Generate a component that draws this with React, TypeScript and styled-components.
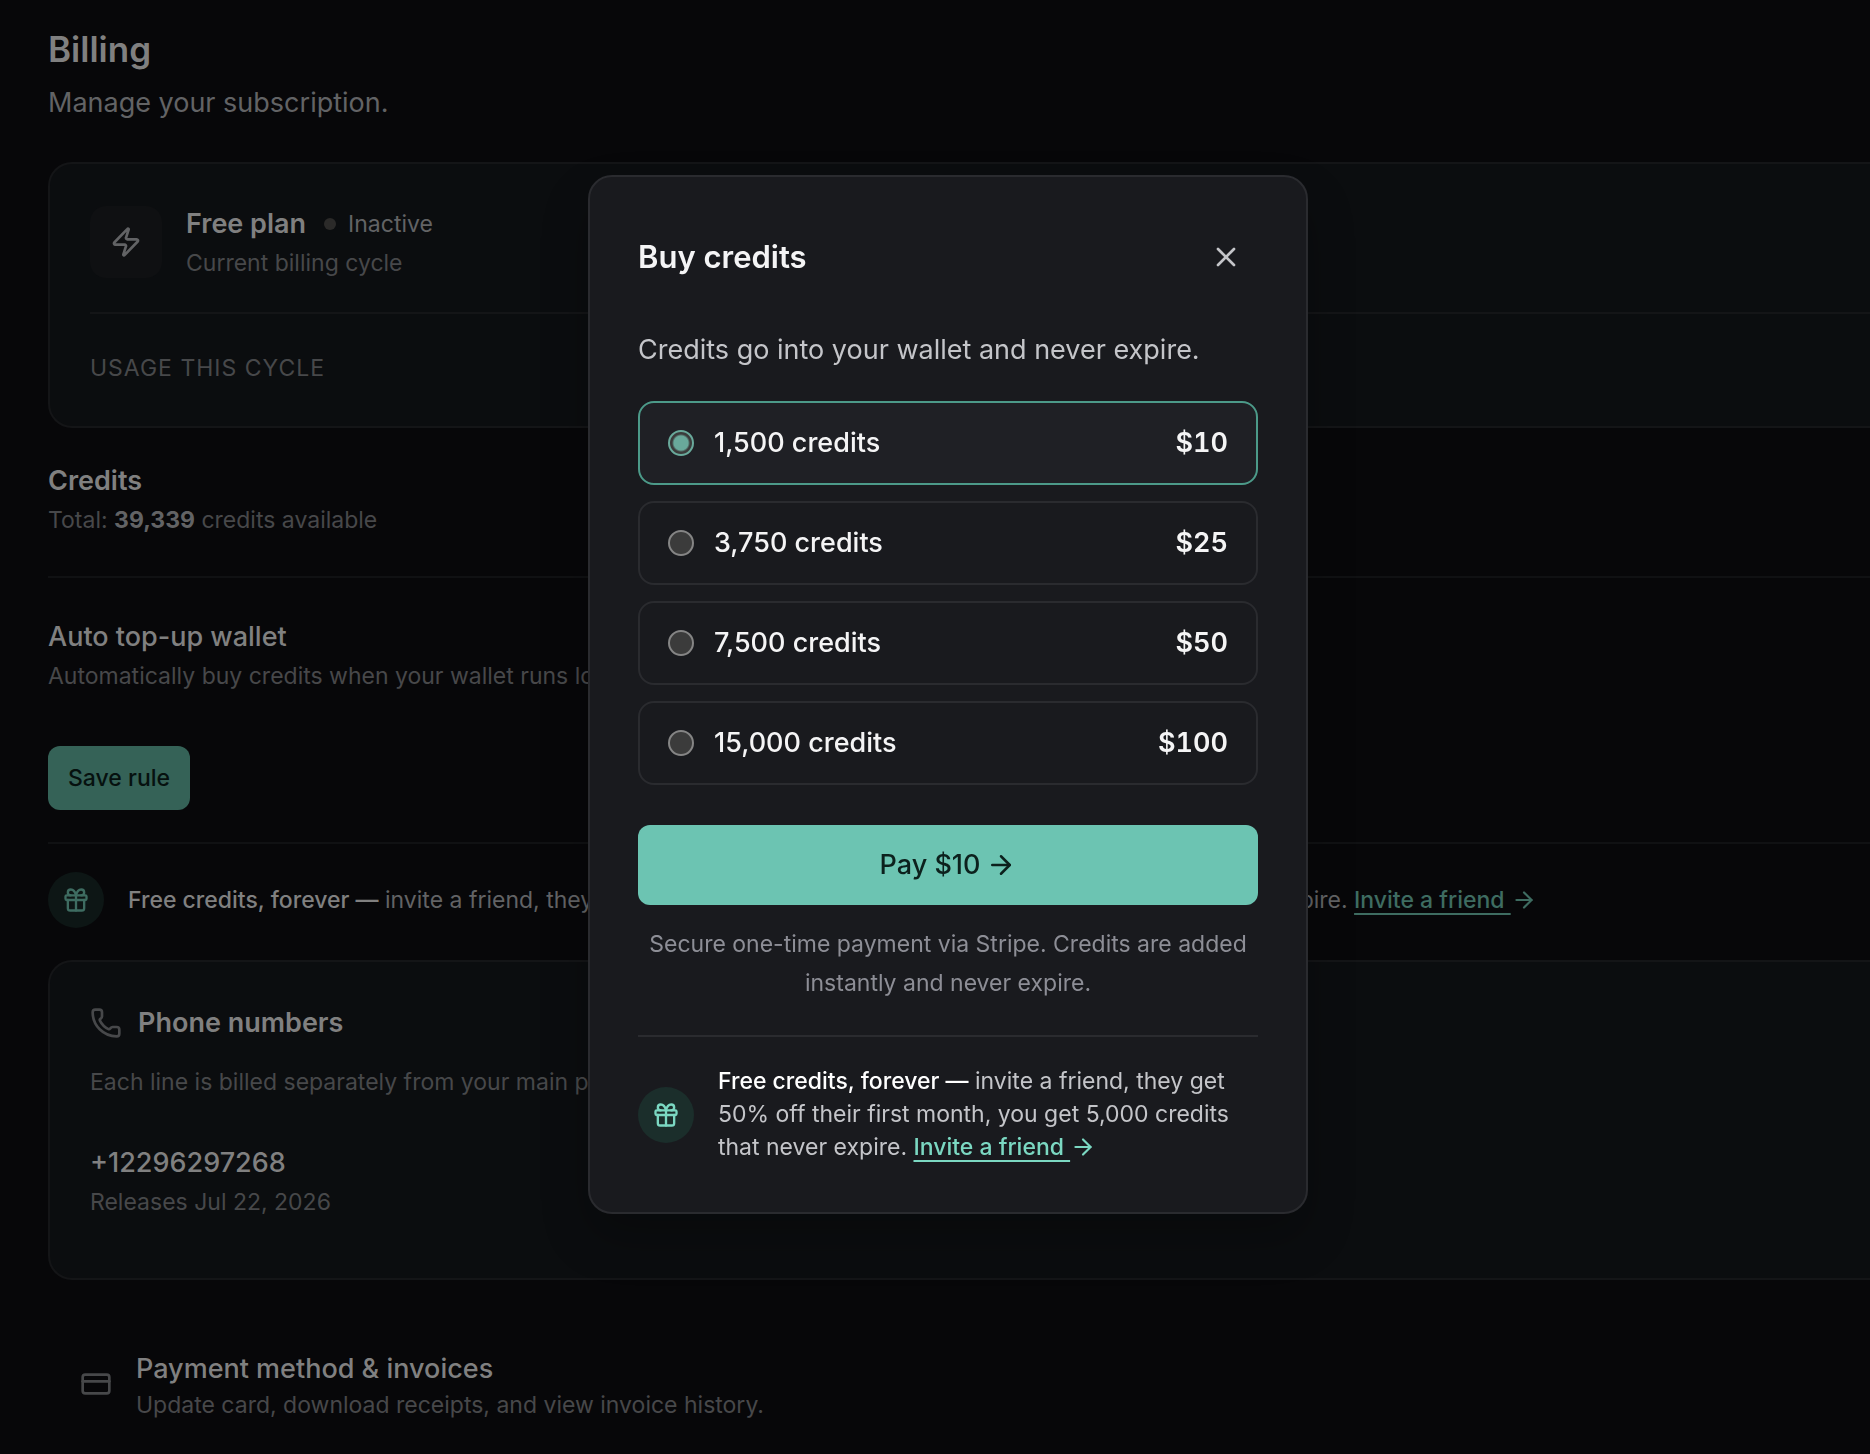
import React, { useState } from "react";
import styled, { createGlobalStyle } from "styled-components";
import { ArrowRight, CreditCard, Gift, Phone, X, Zap } from "lucide-react";

const GlobalStyle = createGlobalStyle`
  *, *::before, *::after { box-sizing: border-box; }
  body {
    margin: 0;
    background: #070709;
    font-family: Inter, "Liberation Sans", sans-serif;
    font-size: 23px;
    line-height: 36px;
    -webkit-font-smoothing: antialiased;
  }
  h1, h2, h3, p { margin: 0; }
  button, input { font: inherit; }
`;

const Page = styled.main`
  min-height: 100vh;
  padding: 28px 0 36px 48px;
  color: #47484a;
  overflow: hidden;
`;

const PageTitle = styled.h1`
  font-size: 35px;
  line-height: 42px;
  font-weight: 600;
  color: #808080;
`;

const PageIntro = styled.p`
  margin-top: 12px;
  font-size: 27px;
  line-height: 42px;
  color: #626365;
`;

/* Cards bleed off the right edge of the window. */
const Card = styled.section`
  border: 2px solid #141517;
  border-right: 0;
  border-radius: 24px 0 0 24px;
  background: #0b0d0f;
  padding-left: 40px;
`;

const PlanCard = styled(Card)`
  margin-top: 38px;
`;

const PlanHeader = styled.div`
  display: flex;
  align-items: center;
  gap: 24px;
  height: 150px;
  padding-top: 8px;
  border-bottom: 2px solid #141517;
`;

const PlanIcon = styled.div`
  display: grid;
  place-items: center;
  width: 72px;
  height: 72px;
  border-radius: 16px;
  background: #0f1012;
  color: #626365;
`;

const Row = styled.div`
  display: flex;
  align-items: center;
`;

const Status = styled.span`
  display: flex;
  align-items: center;
  gap: 12px;
  margin-left: 18px;
  color: #626365;

  &::before {
    content: "";
    width: 12px;
    height: 12px;
    border-radius: 50%;
    background: #2b2a29;
  }
`;

const Heading = styled.h2<{ $weight?: number }>`
  font-size: 27px;
  line-height: 42px;
  font-weight: ${(p) => p.$weight ?? 600};
  color: #808080;
`;

const UsageLabel = styled.p`
  padding: 36px 0 40px;
  letter-spacing: 1px;
`;

const Section = styled.section<{ $top: number; $bottom: number }>`
  padding: ${(p) => p.$top}px 0 ${(p) => p.$bottom}px;
  border-bottom: 2px solid #101113;

  strong { font-weight: 700; color: #626365; }
`;

const SaveButton = styled.button`
  display: block;
  height: 64px;
  margin-top: 52px;
  padding: 0 20px;
  border: 0;
  border-radius: 12px;
  background: #356257;
  color: #06110f;
  font-weight: 500;
`;

const Invite = styled.div<{ $lit?: boolean }>`
  display: flex;
  align-items: center;
  gap: 24px;
  line-height: 33px;
  color: ${(p) => (p.$lit ? "#c4c5c9" : "#626365")};

  strong { font-weight: 500; color: ${(p) => (p.$lit ? "#ffffff" : "#808080")}; }
  a {
    color: ${(p) => (p.$lit ? "#7bd8c2" : "#3e6c61")};
    font-weight: 500;
    text-decoration: none;
    white-space: nowrap;
  }
  a span {
    text-decoration: underline;
    text-decoration-thickness: 2px;
    text-underline-offset: 5px;
    white-space: pre;
  }
  a svg { vertical-align: -5px; }
`;

const GiftBadge = styled.div<{ $lit?: boolean }>`
  flex: none;
  display: grid;
  place-items: center;
  width: 56px;
  height: 56px;
  border-radius: 50%;
  background: ${(p) => (p.$lit ? "#1b2e2b" : "#0d1615")};
  color: ${(p) => (p.$lit ? "#7bd8c2" : "#3e6c61")};
`;

const InviteBar = styled.div`
  padding: 28px 0 32px;
`;

const PhoneCard = styled(Card)`
  padding-top: 40px;
  padding-bottom: 58px;
`;

const PhoneHeader = styled(Row)`
  gap: 16px;
  color: #47484a;
`;

const PhoneNote = styled.p`
  margin-top: 20px;
`;

const PhoneLine = styled.div`
  margin-top: 42px;
`;

const PaymentRow = styled(Row)`
  gap: 24px;
  margin-top: 68px;
  padding-left: 32px;

  p { line-height: 30px; }
`;

const Overlay = styled.div`
  position: fixed;
  inset: 0;
  display: flex;
  justify-content: center;
  align-items: flex-start;
  padding: 175px 0 0 26px;
`;

const Dialog = styled.div`
  width: 720px;
  padding: 48px;
  border: 2px solid #2a2b2f;
  border-radius: 24px;
  background: #191a1e;
  color: #c4c5c9;
  box-shadow: 0 24px 48px rgba(0, 0, 0, 0.24);
`;

const DialogHeader = styled.div`
  display: flex;
  align-items: center;
  justify-content: space-between;
  height: 64px;
`;

const DialogTitle = styled.h2`
  font-size: 31px;
  line-height: 40px;
  font-weight: 600;
  color: #f4f4f5;
`;

const CloseButton = styled.button`
  display: grid;
  place-items: center;
  width: 64px;
  height: 64px;
  padding: 0;
  border: 0;
  background: none;
  color: #c4c5c9;
`;

const DialogIntro = styled.p`
  margin-top: 40px;
  font-size: 27px;
  line-height: 42px;
`;

const Options = styled.div`
  display: grid;
  gap: 16px;
  margin-top: 30px;
`;

const Option = styled.label<{ $on: boolean }>`
  display: flex;
  align-items: center;
  gap: 20px;
  height: 84px;
  padding: 0 28px;
  border: 2px solid ${(p) => (p.$on ? "#4c9a89" : "#2a2b2f")};
  border-radius: 16px;
  background: ${(p) => (p.$on ? "#1f2025" : "transparent")};
  color: #f4f4f5;
  font-size: 27px;
  font-weight: 500;
`;

const Radio = styled.input`
  appearance: none;
  width: 26px;
  height: 26px;
  margin: 0;
  border: 2px solid #858585;
  border-radius: 50%;
  background: #3b3b3b;

  &:checked {
    border-color: #69a99b;
    background: radial-gradient(circle, #69a99b 7px, #3b3b3b 9px);
  }
`;

const Price = styled.span`
  margin-left: auto;
  font-weight: 600;
  font-variant-numeric: tabular-nums;
`;

const PayButton = styled.button`
  display: flex;
  align-items: center;
  justify-content: center;
  gap: 6px;
  width: 100%;
  height: 80px;
  margin-top: 40px;
  border: 0;
  border-radius: 12px;
  background: #6cc4b2;
  color: #0c211d;
  font-size: 27px;
  font-weight: 500;
`;

const Fineprint = styled.p`
  margin-top: 20px;
  line-height: 39px;
  text-align: center;
  color: #8d8e96;
`;

const DialogFooter = styled.div`
  margin-top: 32px;
  padding-top: 28px;
  border-top: 2px solid #2a2b2f;
`;

const packs = [
  { credits: "1,500", price: "$10" },
  { credits: "3,750", price: "$25" },
  { credits: "7,500", price: "$50" },
  { credits: "15,000", price: "$100" },
];

function InviteOffer({ lit }: { lit?: boolean }) {
  return (
    <Invite $lit={lit}>
      <GiftBadge $lit={lit}>
        <Gift size={28} />
      </GiftBadge>
      <p>
        <strong>Free credits, forever —</strong> invite a friend, they get 50% off their first month, you get 5,000
        credits that never expire.{" "}
        <a href="#invite">
          <span>Invite a friend </span>
          <ArrowRight size={26} />
        </a>
      </p>
    </Invite>
  );
}

export default function App() {
  const [selected, setSelected] = useState(0);
  return (
    <>
      <GlobalStyle />
      <Page>
        <PageTitle>Billing</PageTitle>
        <PageIntro>Manage your subscription.</PageIntro>

        <PlanCard>
          <PlanHeader>
            <PlanIcon>
              <Zap size={32} />
            </PlanIcon>
            <div>
              <Row>
                <Heading>Free plan</Heading>
                <Status>Inactive</Status>
              </Row>
              <p>Current billing cycle</p>
            </div>
          </PlanHeader>
          <UsageLabel>USAGE THIS CYCLE</UsageLabel>
        </PlanCard>

        <Section $top={32} $bottom={38}>
          <Heading>Credits</Heading>
          <p>
            Total: <strong>39,339</strong> credits available
          </p>
        </Section>

        <Section $top={38} $bottom={32}>
          <Heading $weight={500}>Auto top-up wallet</Heading>
          <p>Automatically buy credits when your wallet runs low.</p>
          <SaveButton type="button">Save rule</SaveButton>
        </Section>

        <InviteBar>
          <InviteOffer />
        </InviteBar>

        <PhoneCard>
          <PhoneHeader>
            <Phone size={32} />
            <Heading>Phone numbers</Heading>
          </PhoneHeader>
          <PhoneNote>Each line is billed separately from your main plan.</PhoneNote>
          <PhoneLine>
            <Heading $weight={500}>+12296297268</Heading>
            <p>Releases Jul 22, 2026</p>
          </PhoneLine>
        </PhoneCard>

        <PaymentRow>
          <CreditCard size={32} />
          <div>
            <Heading $weight={500}>Payment method &amp; invoices</Heading>
            <p>Update card, download receipts, and view invoice history.</p>
          </div>
        </PaymentRow>
      </Page>

      <Overlay>
        <Dialog role="dialog" aria-labelledby="buy-title">
          <DialogHeader>
            <DialogTitle id="buy-title">Buy credits</DialogTitle>
            <CloseButton type="button" aria-label="Close">
              <X size={32} />
            </CloseButton>
          </DialogHeader>
          <DialogIntro>Credits go into your wallet and never expire.</DialogIntro>
          <Options>
            {packs.map((pack, i) => (
              <Option key={pack.price} $on={i === selected}>
                <Radio type="radio" name="pack" checked={i === selected} onChange={() => setSelected(i)} />
                {pack.credits} credits
                <Price>{pack.price}</Price>
              </Option>
            ))}
          </Options>
          <PayButton type="button">
            Pay {packs[selected].price}
            <ArrowRight size={30} />
          </PayButton>
          <Fineprint>Secure one-time payment via Stripe. Credits are added instantly and never expire.</Fineprint>
          <DialogFooter>
            <InviteOffer lit />
          </DialogFooter>
        </Dialog>
      </Overlay>
    </>
  );
}
